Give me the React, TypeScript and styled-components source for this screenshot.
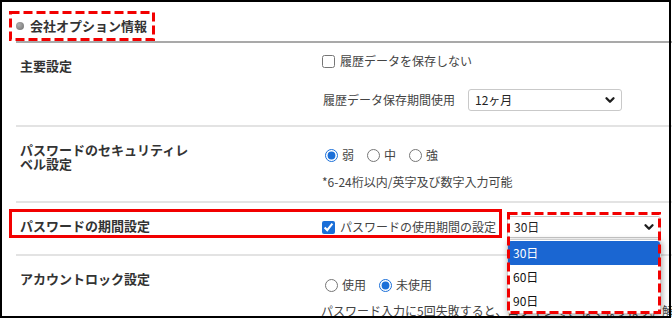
import React from "react";
import styled, { createGlobalStyle } from "styled-components";

const GlobalStyle = createGlobalStyle`
  html, body { margin: 0; padding: 0; background: #fff; overflow: hidden; }
  body { font-family: "Noto Sans CJK JP", "Noto Sans", sans-serif; }
  * { box-sizing: border-box; }
`;

const RED = "#f20000";

const Page = styled.div`
  position: relative;
  width: 672px;
  height: 319px;
  overflow: hidden;
  padding-left: 16px;
`;

const FrameBorder = styled.div`
  position: absolute;
  left: 0;
  top: 0;
  width: 671px;
  height: 318px;
  border: 2px solid #000;
  pointer-events: none;
  z-index: 10;
`;

const Header = styled.div`
  position: relative;
  display: flex;
  align-items: center;
  gap: 6px;
  padding: 18px 0 7px 0;
  line-height: 16px;
  border-bottom: 2px solid #a9a9a9;
  font-size: 13px;
  font-weight: 700;
  color: #333;
`;

const Bullet = styled.span`
  width: 8px;
  height: 8px;
  border-radius: 50%;
  background: radial-gradient(circle at 35% 35%, #b0b0b0, #6e6e6e);
  flex: none;
`;

const Row = styled.div`
  position: relative;
  display: grid;
  grid-template-columns: 305px 1fr;
  border-bottom: 2px solid #e3e3e3;
`;

const Label = styled.div`
  padding: 16px 0 0 4px;
  max-width: 176px;
  font-size: 13px;
  font-weight: 700;
  line-height: 14px;
  color: #333;
`;

const Content = styled.div<{ $pt: number; $pb: number }>`
  padding: ${(p) => p.$pt}px 0 ${(p) => p.$pb}px 0;
  display: flex;
  flex-direction: column;
  font-size: 12px;
  line-height: 16px;
  color: #444;
`;

const Line = styled.div<{ $mt?: number }>`
  display: flex;
  align-items: center;
  margin-top: ${(p) => p.$mt ?? 0}px;
  white-space: nowrap;
`;

const Check = styled.input.attrs({ type: "checkbox" })`
  width: 13px;
  height: 13px;
  margin: 0 5px 0 1px;
  accent-color: #1b6fd8;
`;

const Radio = styled.input.attrs({ type: "radio" })`
  width: 13px;
  height: 13px;
  margin: 0 4px 0 4px;
  accent-color: #1b6fd8;
`;

const RadioItem = styled.label`
  display: flex;
  align-items: center;
  margin-right: 9px;
`;

const InlineText = styled.span<{ $ml?: number }>`
  margin-left: ${(p) => p.$ml ?? 0}px;
`;

const SelectWrap = styled.div<{ $ml?: number; $mr?: number; $auto?: boolean }>`
  position: relative;
  margin-left: ${(p) => (p.$auto ? "auto" : `${p.$ml ?? 0}px`)};
  margin-right: ${(p) => p.$mr ?? 0}px;
`;

const SelectBox = styled.div`
  display: flex;
  align-items: center;
  justify-content: space-between;
  width: 154px;
  height: 22px;
  padding: 0 4px 0 6px;
  border: 1px solid #c9c9c9;
  border-radius: 3px;
  background: #fff;
  font-size: 12px;
  color: #222;
`;

const Dropdown = styled.div`
  position: absolute;
  left: 0;
  right: 0;
  top: calc(100% + 1px);
  padding: 1px 0 0 0;
  background: #fff;
  border: 1px solid #cfcfcf;
  border-radius: 4px;
  box-shadow: 1px 2px 6px rgba(0, 0, 0, 0.35);
  z-index: 3;
`;

const Option = styled.div<{ $selected?: boolean }>`
  height: 24px;
  line-height: 24px;
  padding-left: 5px;
  font-size: 12px;
  color: ${(p) => (p.$selected ? "#fff" : "#111")};
  background: ${(p) => (p.$selected ? "#1a66d2" : "transparent")};
  border-radius: ${(p) => (p.$selected ? "3px" : "0")};
`;

const SolidMark = styled.div`
  position: absolute;
  left: -7px;
  top: 6px;
  width: 493px;
  height: 29px;
  border: 3px solid ${RED};
  pointer-events: none;
  z-index: 4;
`;

const DashSvg = styled.svg<{ $l: number; $t: number }>`
  position: absolute;
  left: ${(p) => p.$l}px;
  top: ${(p) => p.$t}px;
  pointer-events: none;
  overflow: visible;
  z-index: 5;
`;

function DashedMark({ l, t, w, h }: { l: number; t: number; w: number; h: number }) {
  return (
    <DashSvg $l={l} $t={t} width={w} height={h}>
      <rect
        x={1.5}
        y={1.5}
        width={w - 3}
        height={h - 3}
        fill="none"
        stroke={RED}
        strokeWidth={3}
        strokeDasharray="9 4"
      />
    </DashSvg>
  );
}

function Chevron() {
  return (
    <svg width="14" height="14" viewBox="0 0 24 24" fill="none">
      <path d="m6 9 6 6 6-6" stroke="#1e1e1e" strokeWidth="4" strokeLinecap="round" strokeLinejoin="round" />
    </svg>
  );
}

function Select({ value }: { value: string }) {
  return (
    <SelectBox>
      <span>{value}</span>
      <Chevron />
    </SelectBox>
  );
}

export default function App() {
  return (
    <>
      <GlobalStyle />
      <Page>
        <FrameBorder />
        <Header>
          <DashedMark l={-7} t={11} w={146} h={30} />
          <Bullet />
          <span>会社オプション情報</span>
        </Header>

        <Row>
          <Label>主要設定</Label>
          <Content $pt={10} $pb={14}>
            <Line>
              <Check />
              <span>履歴データを保存しない</span>
            </Line>
            <Line $mt={20}>
              <InlineText $ml={2}>履歴データ保存期間使用</InlineText>
              <SelectWrap $ml={13}>
                <Select value="12ヶ月" />
              </SelectWrap>
            </Line>
          </Content>
        </Row>

        <Row>
          <Label>パスワードのセキュリティレベル設定</Label>
          <Content $pt={20} $pb={11}>
            <Line>
              <RadioItem>
                <Radio name="level" defaultChecked />弱
              </RadioItem>
              <RadioItem>
                <Radio name="level" />中
              </RadioItem>
              <RadioItem>
                <Radio name="level" />強
              </RadioItem>
            </Line>
            <Line $mt={11}>
              <InlineText $ml={1}>*6-24桁以内/英字及び数字入力可能</InlineText>
            </Line>
          </Content>
        </Row>

        <Row>
          <SolidMark />
          <Label>パスワードの期間設定</Label>
          <Content $pt={13} $pb={16}>
            <Line>
              <Check defaultChecked />
              <span>パスワードの使用期間の設定</span>
              <SelectWrap $auto $mr={11}>
                <Select value="30日" />
                <Dropdown>
                  <Option $selected>30日</Option>
                  <Option>60日</Option>
                  <Option>90日</Option>
                </Dropdown>
                <DashedMark l={0} t={-4} w={154} h={102} />
              </SelectWrap>
            </Line>
          </Content>
        </Row>

        <Row>
          <Label>アカウントロック設定</Label>
          <Content $pt={21} $pb={10}>
            <Line>
              <RadioItem>
                <Radio name="lock" />使用
              </RadioItem>
              <RadioItem>
                <Radio name="lock" defaultChecked />未使用
              </RadioItem>
            </Line>
            <Line $mt={10}>
              <InlineText>
                パスワード入力に5回失敗すると、ログインできなくなります。解除が
              </InlineText>
            </Line>
            <Line>
              <InlineText>管理者がロック解除を行うまで、該当ユーザーはログインできません。</InlineText>
            </Line>
          </Content>
        </Row>
      </Page>
    </>
  );
}
